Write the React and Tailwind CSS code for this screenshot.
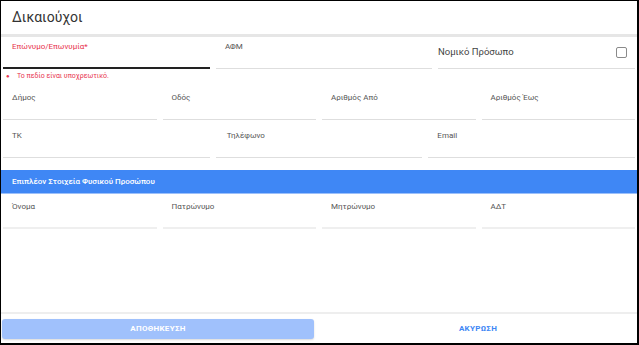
import { useState } from 'react';

function Field({ label, error, pad = 'pl-[9px]', line = 'border-b border-[#dedede]' }) {
  return (
    <div className={`h-[32px] ${line}`}>
      <div className={`${pad} pt-[5px] text-[8px] leading-[10px] ${error ? 'text-[#e8344e]' : 'text-[#555]'}`}>
        {label}
      </div>
    </div>
  );
}

export default function App() {
  const [legal, setLegal] = useState(false);

  return (
    <div
      className="w-[639px] h-[345px] bg-white flex flex-col border-l border-t border-r-2 border-b-2 border-black overflow-hidden"
      style={{ fontFamily: 'Roboto, "Noto Sans", sans-serif' }}
    >
      {/* Header */}
      <div className="h-[36px] flex items-center pl-[11px] border-b-[3px] border-[#e6e6e6] text-[14px] text-[#333] shrink-0">
        Δικαιούχοι
      </div>

      <div className="flex-1 px-[2px]">
        {/* Row 1 */}
        <div className="flex gap-[6px]">
          <div className="w-[207px]">
            <Field label="Επώνυμο/Επωνυμία*" error line="border-b-2 border-[#222]" />
          </div>
          <div className="w-[216px]">
            <Field label="ΑΦΜ" />
          </div>
          <div className="flex-1 h-[32px] border-b border-[#dedede] flex items-center justify-between pr-[8px] pb-[1px]">
            <span className="text-[9.5px] text-[#444]">Νομικό Πρόσωπο</span>
            <button
              onClick={() => setLegal(!legal)}
              className={`w-[11px] h-[11px] border border-[#8a8a8a] rounded-[2px] ${legal ? 'bg-[#3f87f5]' : 'bg-white'}`}
            />
          </div>
        </div>

        {/* Error */}
        <div className="h-[19px] flex items-start pt-[2px] pl-[3px] text-[7px] leading-[10px] text-[#e8344e]">
          <span className="w-[11px] text-[6px]">●</span>
          <span>Το πεδίο είναι υποχρεωτικό.</span>
        </div>

        {/* Row 2 */}
        <div className="grid grid-cols-4 gap-[6px]">
          <Field label="Δήμος" />
          <Field label="Οδός" />
          <Field label="Αριθμός Από" />
          <Field label="Αριθμός Έως" />
        </div>

        {/* Row 3 */}
        <div className="grid grid-cols-3 gap-[6px] mt-[6px]">
          <Field label="ΤΚ" />
          <Field label="Τηλέφωνο" pad="pl-[11px]" />
          <Field label="Email" />
        </div>

        {/* Section bar */}
        <div className="-mx-[2px] mt-[12px] h-[24px] bg-[#3f87f5] border-b border-[#9cc0fa] flex items-center pl-[11px] text-[8px] font-medium text-white">
          Επιπλέον Στοιχεία Φυσικού Προσώπου
        </div>

        {/* Row 4 */}
        <div className="grid grid-cols-4 gap-[6px] mt-[3px]">
          <Field label="Όνομα" line="border-b-2 border-[#efefef]" />
          <Field label="Πατρώνυμο" line="border-b-2 border-[#efefef]" />
          <Field label="Μητρώνυμο" line="border-b-2 border-[#efefef]" />
          <Field label="ΑΔΤ" line="border-b-2 border-[#efefef]" />
        </div>
      </div>

      {/* Footer */}
      <div className="shrink-0 border-t-2 border-[#eeeeee] flex items-center px-[1px] pt-[5px] pb-[4px] gap-[6px]">
        <button className="w-[312px] h-[20px] rounded-[3px] bg-[#a0c1fc] text-white text-[8px] font-bold tracking-[0.3px] shadow-[0_1px_2px_rgba(0,0,0,0.15)]">
          ΑΠΟΘΗΚΕΥΣΗ
        </button>
        <button className="flex-1 h-[20px] text-[#3f87f5] text-[8px] font-bold tracking-[0.3px]">
          ΑΚΥΡΩΣΗ
        </button>
      </div>
    </div>
  );
}
